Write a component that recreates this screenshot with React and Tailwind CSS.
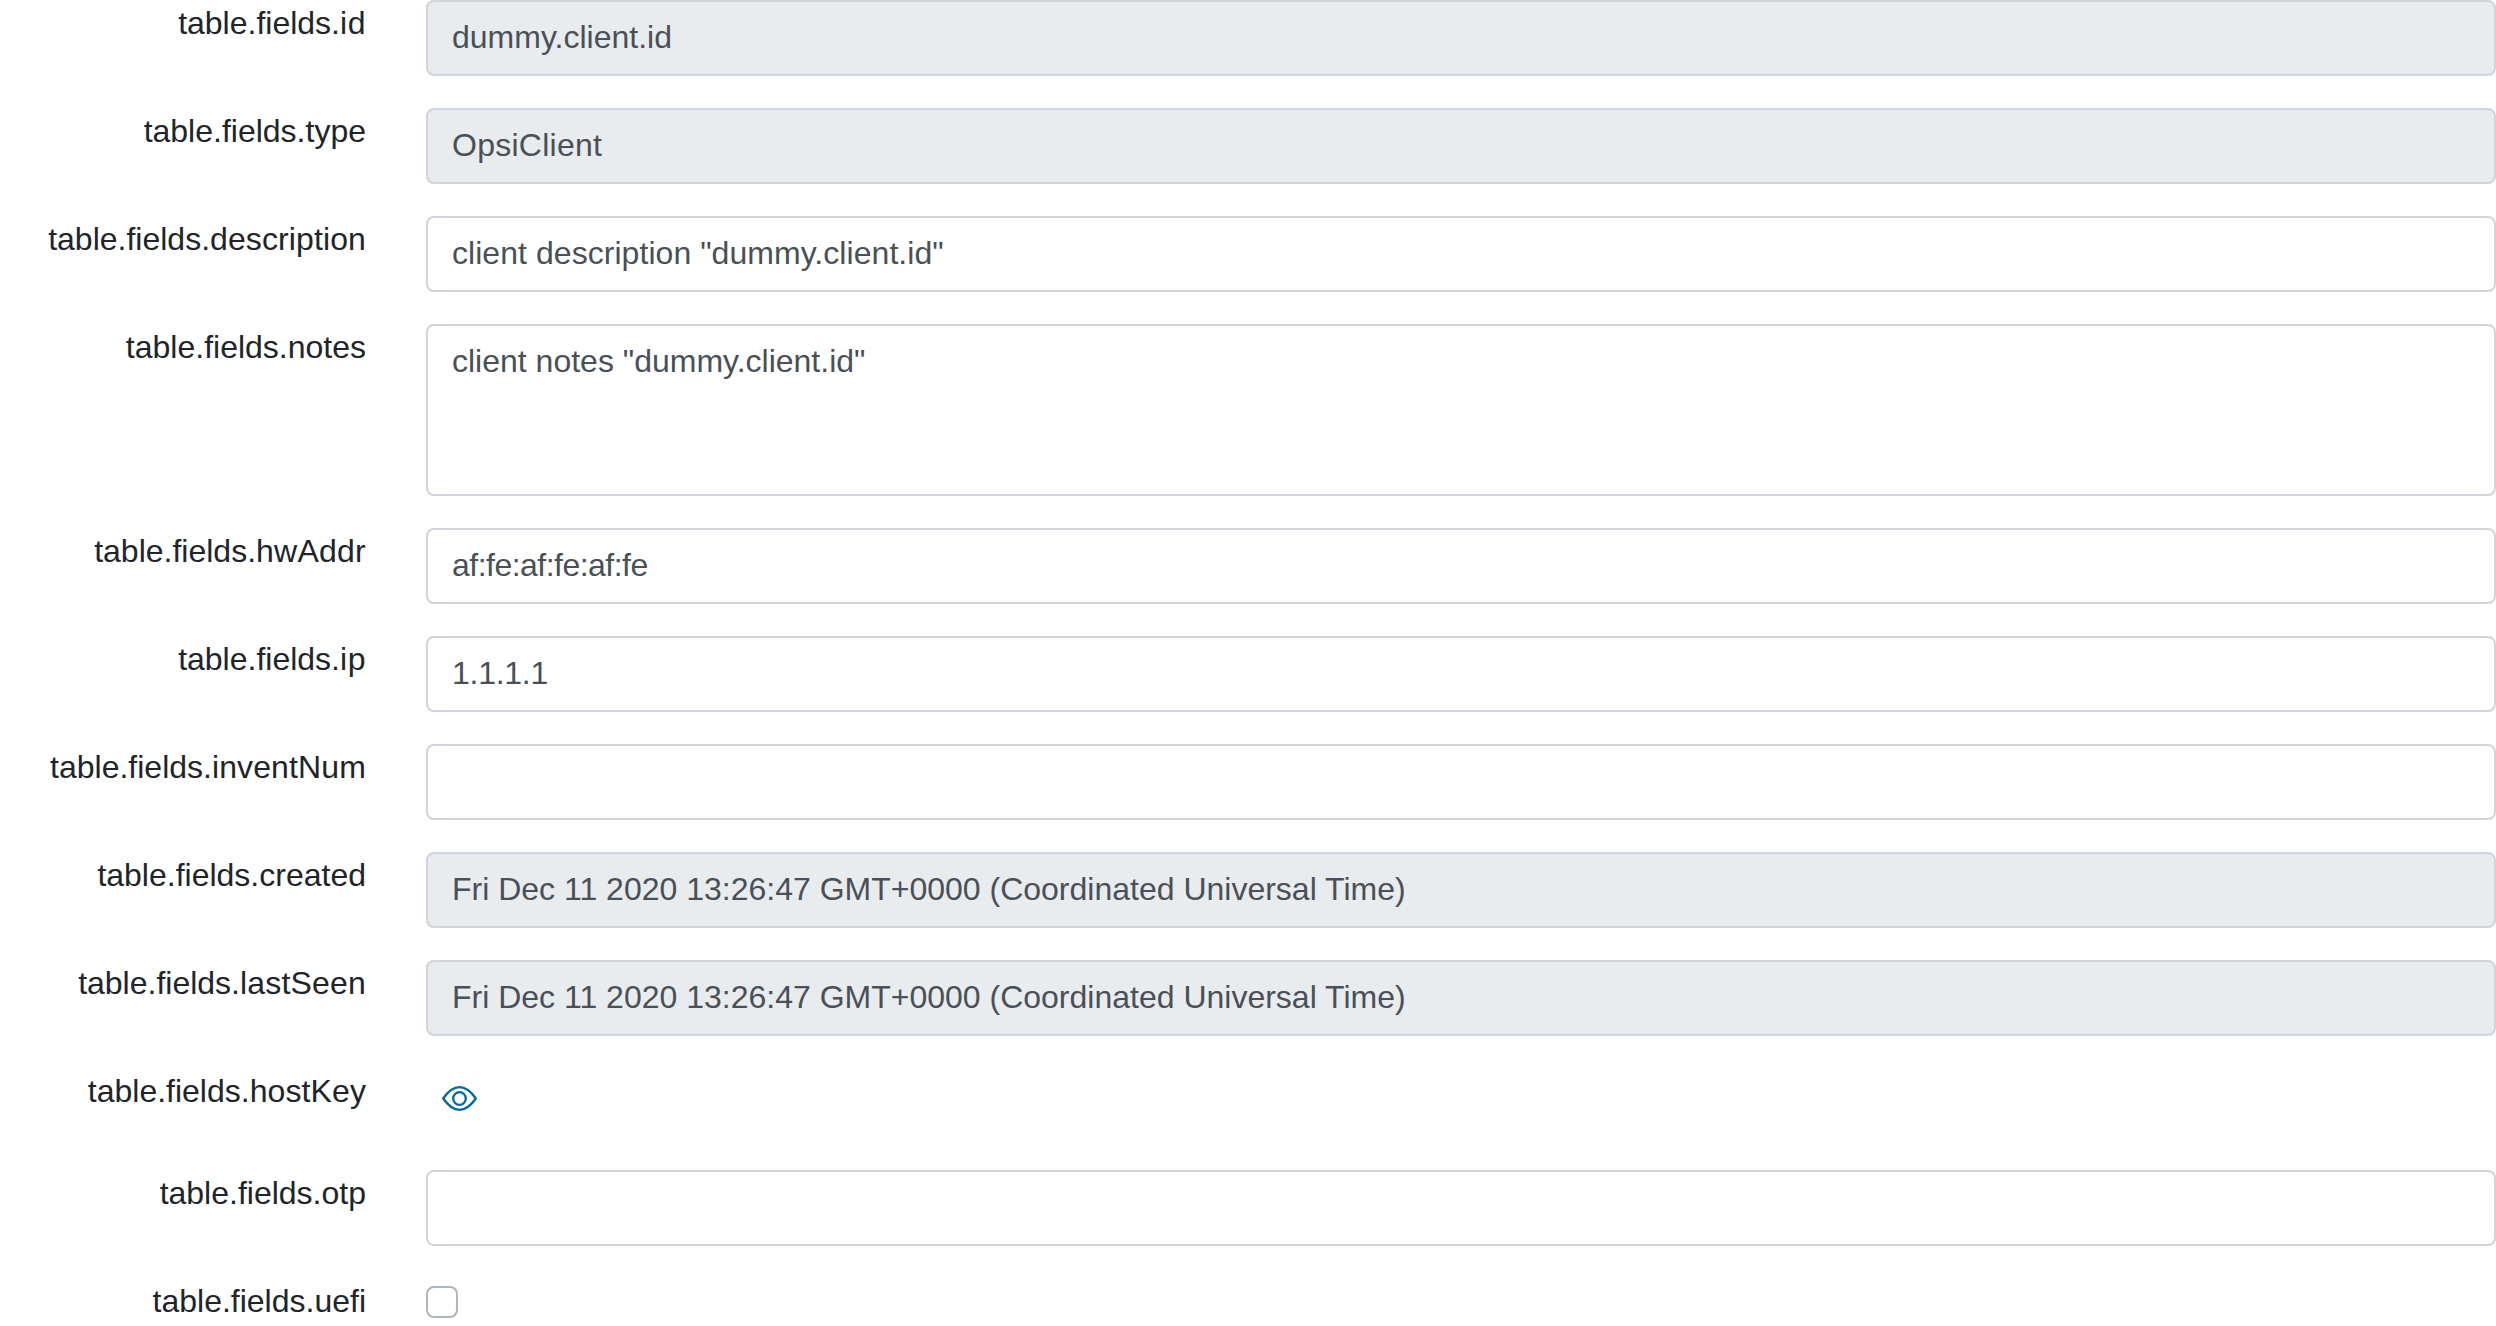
const fields = [
  { name: "id", value: "dummy.client.id", disabled: true, nameTracking: "tracking-[0.27px]" },
  { name: "type", value: "OpsiClient", disabled: true, valueTracking: "tracking-[0.13px]" },
  {
    name: "description",
    value: 'client description "dummy.client.id"',
    nameTracking: "tracking-[0.055px]",
    valueTracking: "tracking-[0.025px]",
  },
  { name: "notes", value: 'client notes "dummy.client.id"', kind: "area" },
  {
    name: "hwAddr",
    value: "af:fe:af:fe:af:fe",
    nameTracking: "tracking-[0.12px]",
    valueTracking: "tracking-[-0.26px]",
  },
  { name: "ip", value: "1.1.1.1", nameTracking: "tracking-[0.27px]", valueTracking: "tracking-[-0.13px]" },
  { name: "inventNum", value: "", nameTracking: "tracking-[0.06px]" },
  { name: "created", value: "Fri Dec 11 2020 13:26:47 GMT+0000 (Coordinated Universal Time)", disabled: true },
  {
    name: "lastSeen",
    value: "Fri Dec 11 2020 13:26:47 GMT+0000 (Coordinated Universal Time)",
    disabled: true,
    nameTracking: "tracking-[0.09px]",
  },
  { name: "hostKey", kind: "key", nameTracking: "tracking-[0.05px]" },
  { name: "otp", value: "" },
  { name: "uefi", kind: "check" },
];

const box = "block w-full rounded border border-[#ced4da] px-3 py-1.5 text-base text-[#495057]";

function EyeIcon() {
  return (
    <svg className="h-[12.5px] w-[17.5px] text-[#00699e]" viewBox="0 0 35 25" fill="none" stroke="currentColor" strokeWidth="2.3" strokeLinejoin="round">
      <path d="M1.200 12.500C5.700 6 11 1.200 17.500 1.200S29.300 6 33.800 12.500C29.300 19 24 23.800 17.500 23.800S5.700 19 1.200 12.500Z" />
      <circle cx="17.5" cy="12.5" r="6.3" />
    </svg>
  );
}

function Control({ field }) {
  if (field.kind === "area") {
    return <div className={`${box} h-[86px] bg-white`}>{field.value}</div>;
  }
  if (field.kind === "key") {
    return (
      <div className="h-[35px] pt-[9.25px] pl-2">
        <EyeIcon />
      </div>
    );
  }
  if (field.kind === "check") {
    return <div className="mt-1 h-4 w-4 rounded border border-[#adb5bd] bg-white" />;
  }
  return (
    <div className={`${box} h-[38px] ${field.disabled ? "bg-[#e9ecef]" : "bg-white"} ${field.valueTracking ?? ""}`}>
      {field.value}
    </div>
  );
}

function Label({ field }) {
  return (
    <div className="w-[183px] shrink-0 text-right text-base text-[#212529]">
      {field.nameTracking ? (
        <>
          table.fields.<span className={field.nameTracking}>{field.name}</span>
        </>
      ) : (
        `table.fields.${field.name}`
      )}
    </div>
  );
}

export default function App() {
  return (
    <div className="h-[1326px] w-full overflow-hidden bg-white">
      <form className="flex h-[663px] w-[1248px] origin-top-left scale-[2] flex-col gap-4 overflow-hidden font-['Liberation_Sans',sans-serif]">
        {fields.map((field) => (
          <div key={field.name} className="flex shrink-0 items-start">
            <Label field={field} />
            <div className="ml-[30px] min-w-0 flex-1">
              <Control field={field} />
            </div>
          </div>
        ))}
      </form>
    </div>
  );
}
